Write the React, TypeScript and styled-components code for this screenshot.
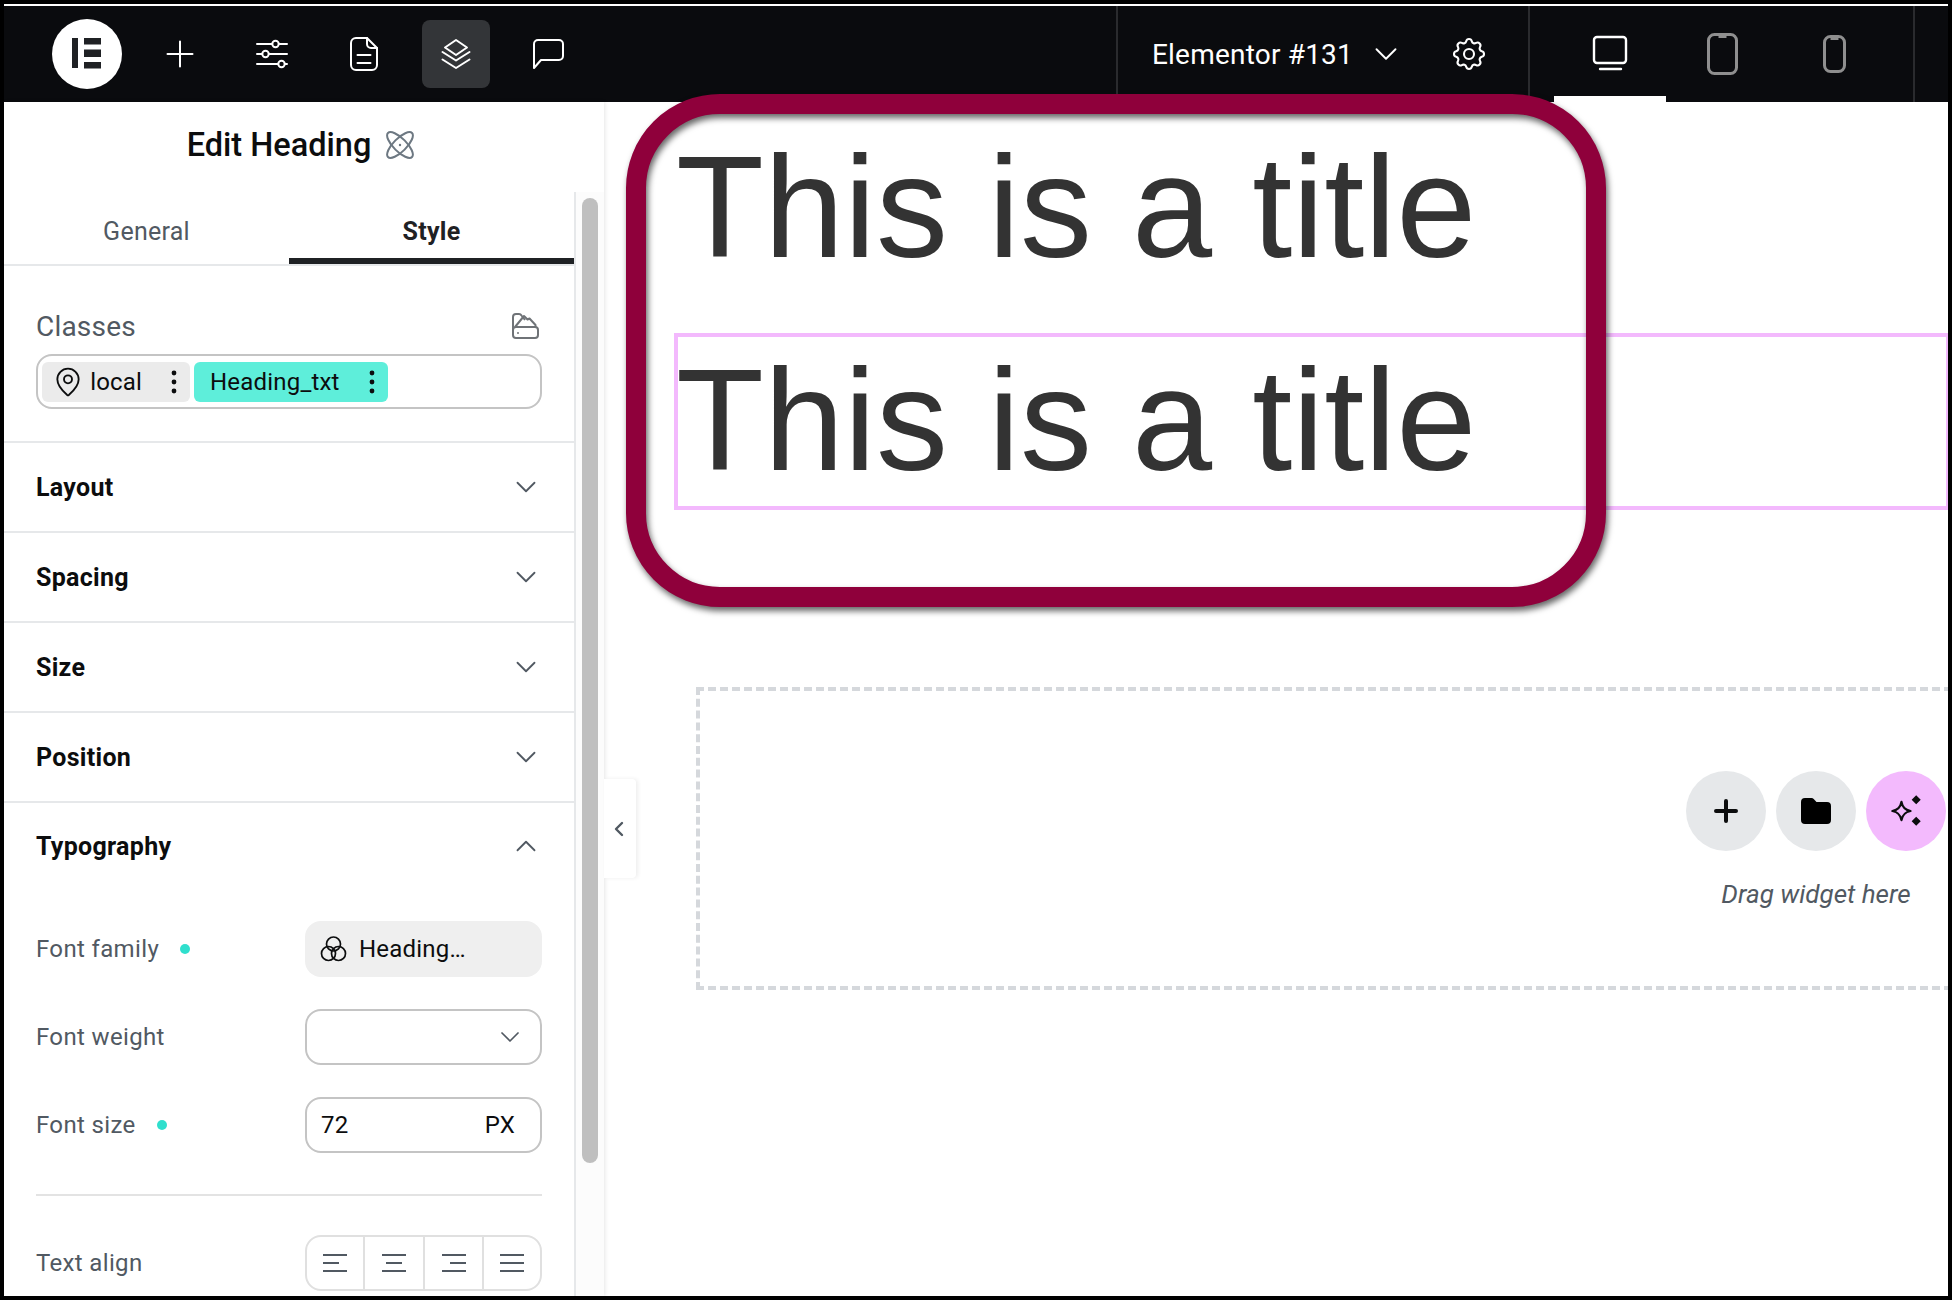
import { createGlobalStyle, styled } from 'styled-components';
import { ChevronDown, ChevronLeft, ChevronUp, MapPin } from 'lucide-react';
import { TbSettings } from 'react-icons/tb';

const GlobalStyle = createGlobalStyle`
  html, body {
    margin: 0;
    padding: 0;
    background: #fff;
  }
  * {
    box-sizing: border-box;
  }
`;

const Frame = styled.div`
  position: relative;
  width: 1952px;
  height: 1300px;
  border: 4px solid #000;
  background: #fff;
  font-family: Roboto, 'Liberation Sans', sans-serif;
  overflow: hidden;
  display: flex;
  flex-direction: column;
`;

const TopBar = styled.header`
  flex: none;
  height: 98px;
  border-top: 2px solid #fff;
  background: #0a0b0e;
  display: flex;
  align-items: stretch;
  justify-content: space-between;
  padding: 0 33px 0 48px;
`;

const BarGroup = styled.div`
  display: flex;
  align-items: center;
  gap: 24px;
`;

const Logo = styled.div`
  width: 70px;
  height: 70px;
  border-radius: 50%;
  background: #fff;
  display: flex;
  align-items: center;
  justify-content: center;
`;

const ToolButton = styled.div<{ $active?: boolean }>`
  width: 68px;
  height: 68px;
  border-radius: 8px;
  background: ${({ $active }) => ($active ? '#333538' : 'transparent')};
  color: #fff;
  display: flex;
  align-items: center;
  justify-content: center;
`;

const BarRight = styled.div`
  display: flex;
  align-items: stretch;
`;

const DocumentGroup = styled.div`
  width: 412px;
  border-left: 2px solid #2a2b2e;
  padding-left: 34px;
  color: #fff;
  display: flex;
  align-items: center;
`;

const DocumentName = styled.span`
  font-size: 28px;
  letter-spacing: 0.2px;
  margin-right: 14px;
`;

const GearSlot = styled.div`
  margin-left: 44px;
  display: flex;
`;

const DeviceGroup = styled.div`
  width: 387px;
  border-left: 2px solid #2a2b2e;
  border-right: 2px solid #2a2b2e;
  padding-left: 24px;
  display: flex;
`;

const DeviceButton = styled.div<{ $active?: boolean }>`
  width: 112px;
  border-bottom: 6px solid ${({ $active }) => ($active ? '#fff' : 'transparent')};
  padding-top: 6px;
  display: flex;
  align-items: center;
  justify-content: center;
`;

const Workspace = styled.div`
  flex: 1;
  min-height: 0;
  display: flex;
  position: relative;
`;

const Panel = styled.aside`
  flex: none;
  width: 600px;
  display: flex;
  flex-direction: column;
  box-shadow: 1px 0 4px rgba(0, 0, 0, 0.1);
`;

const PanelHeader = styled.div`
  flex: none;
  height: 90px;
  padding: 0 7px 4px 0;
  display: flex;
  align-items: center;
  justify-content: center;
  gap: 15px;
`;

const PanelTitle = styled.h1`
  margin: 0;
  font-size: 32.5px;
  font-weight: 500;
  color: #0c0d0e;
`;

const PanelScroll = styled.div`
  flex: 1;
  min-height: 0;
  display: flex;
`;

const PanelBody = styled.div`
  flex: none;
  width: 572px;
  border-right: 2px solid #e6e8ea;
  overflow: hidden;
`;

const Track = styled.div`
  flex: 1;
  padding: 6px 6px 0 6px;
  background: #fcfcfc;
`;

const Thumb = styled.div`
  width: 16px;
  height: 965px;
  border-radius: 8px;
  background: #bfbfbf;
`;

const Tabs = styled.div`
  height: 74px;
  border-bottom: 2px solid #e6e8ea;
  display: flex;
`;

const Tab = styled.div<{ $active?: boolean }>`
  position: relative;
  width: 285px;
  display: flex;
  align-items: center;
  justify-content: center;
  padding-top: 6px;
  font-size: 25px;
  letter-spacing: 0.25px;
  font-weight: ${({ $active }) => ($active ? 700 : 400)};
  color: ${({ $active }) => ($active ? '#1f2124' : '#515962')};

  ${({ $active }) =>
    $active
      ? `&::after {
          content: '';
          position: absolute;
          left: 0;
          right: 0;
          bottom: 0;
          height: 6px;
          background: #1f2124;
        }`
      : ''}
`;

const ClassesSection = styled.section`
  padding: 44px 32px 32px;
  border-bottom: 2px solid #e6e8ea;
`;

const ClassesHeader = styled.div`
  height: 30px;
  margin-bottom: 14px;
  padding: 2px 3px 0 0;
  display: flex;
  align-items: center;
  justify-content: space-between;
`;

const ClassesLabel = styled.span`
  font-size: 28px;
  letter-spacing: 0.2px;
  color: #515962;
`;

const ClassesInput = styled.div`
  height: 55px;
  width: 506px;
  border: 2px solid #c4c4c4;
  border-radius: 16px;
  padding: 6px 4px;
  display: flex;
  gap: 4px;
`;

const Chip = styled.div<{ $width: number; $tone: 'neutral' | 'accent' }>`
  width: ${({ $width }) => $width}px;
  height: 40px;
  border-radius: 6px;
  background: ${({ $tone }) => ($tone === 'accent' ? '#5eeeda' : '#ebebeb')};
  padding: ${({ $tone }) => ($tone === 'accent' ? '0 13px 0 16px' : '0 13px 0 10px')};
  display: flex;
  align-items: center;
  font-size: 24px;
  letter-spacing: 0.2px;
  color: #0c0d0e;
`;

const ChipText = styled.span`
  flex: 1;
  white-space: nowrap;
`;

const AccordionRow = styled.div`
  height: 90px;
  border-bottom: 2px solid #e6e8ea;
  padding: 0 31px 0 32px;
  display: flex;
  align-items: center;
  justify-content: space-between;
`;

const AccordionHead = styled(AccordionRow)`
  border-bottom: none;
  height: 86px;
`;

const AccordionLabel = styled.span`
  font-size: 25px;
  letter-spacing: 0.3px;
  font-weight: 700;
  color: #0c0d0e;
`;

const Fields = styled.div`
  padding: 32px 32px 0;
  display: flex;
  flex-direction: column;
  gap: 32px;
`;

const FieldRow = styled.div`
  display: flex;
  align-items: center;
  justify-content: space-between;
`;

const FieldLabel = styled.div`
  display: flex;
  align-items: center;
  gap: 21px;
  font-size: 24px;
  letter-spacing: 0.35px;
  color: #515962;
`;

const ChangedDot = styled.span`
  width: 10px;
  height: 10px;
  border-radius: 50%;
  background: #2fdfcd;
`;

const Control = styled.div<{ $filled?: boolean }>`
  width: 237px;
  height: 56px;
  border-radius: 16px;
  border: ${({ $filled }) => ($filled ? 'none' : '2px solid #c4c4c4')};
  background: ${({ $filled }) => ($filled ? '#efefef' : '#fff')};
  padding: 0 16px 0 ${({ $filled }) => ($filled ? '15px' : '14px')};
  display: flex;
  align-items: center;
  justify-content: space-between;
  font-size: 24px;
  letter-spacing: 0.2px;
  color: #0c0d0e;
`;

const StartGroup = styled.div`
  display: flex;
  align-items: center;
  gap: 12px;
`;

const UnitText = styled.span`
  margin-right: 9px;
`;

const FieldDivider = styled.hr`
  margin: 9px 0 7px;
  border: none;
  height: 2px;
  background: #e3e3e3;
`;

const AlignGroup = styled.div`
  width: 237px;
  height: 56px;
  border: 2px solid #e0e0e0;
  border-radius: 16px;
  display: grid;
  grid-template-columns: 56px 60px 59px 1fr;
`;

const AlignCell = styled.div`
  display: flex;
  align-items: center;
  justify-content: center;
  & + & {
    border-left: 2px solid #e0e0e0;
  }
`;

const Canvas = styled.main`
  flex: 1;
  min-width: 0;
  overflow: hidden;
  padding-top: 20px;
`;

const Titles = styled.div`
  padding-left: 72px;
  display: flex;
  flex-direction: column;
  gap: 40px;
`;

const Title = styled.h2<{ $selected?: boolean }>`
  margin: 0;
  font-family: 'Liberation Sans', Arial, sans-serif;
  font-size: 144px;
  font-weight: 400;
  line-height: 1.2;
  color: #333;
  white-space: nowrap;
  outline: ${({ $selected }) => ($selected ? '4px solid #f3b9fd' : 'none')};
  outline-offset: -2px;
`;

const DropZone = styled.div`
  width: 2240px;
  height: 303px;
  margin: 179px 0 0 92px;
  border: 4px dashed #d5d8dc;
  padding-top: 80px;
  display: flex;
  flex-direction: column;
  align-items: center;
`;

const DropButtons = styled.div`
  display: flex;
  gap: 10px;
`;

const DropButton = styled.div<{ $accent?: boolean }>`
  width: 80px;
  height: 80px;
  border-radius: 50%;
  background: ${({ $accent }) => ($accent ? '#f3bafd' : '#e6e8ea')};
  display: flex;
  align-items: center;
  justify-content: center;
`;

const DropHint = styled.p`
  margin: 28px 0 0;
  font-size: 26px;
  font-style: italic;
  line-height: 30px;
  color: #515962;
`;

const CollapseTab = styled.div`
  position: absolute;
  left: 600px;
  top: 677px;
  width: 32px;
  height: 99px;
  background: #fff;
  border-radius: 0 4px 4px 0;
  box-shadow: 2px 0 4px rgba(0, 0, 0, 0.07);
  color: #515962;
  display: flex;
  align-items: center;
  justify-content: center;
  padding-right: 3px;
`;

const CalloutRing = styled.div`
  position: absolute;
  left: 622px;
  top: 90px;
  width: 980px;
  height: 513px;
  border: 20px solid #8f003b;
  border-radius: 94px;
  filter: drop-shadow(2px 4px 3px rgba(0, 0, 0, 0.6));
  pointer-events: none;
`;

const ElementorMark = () => (
  <svg width="70" height="70" viewBox="0 0 70 70" fill="#1f2124">
    <rect x="20" y="19" width="6" height="30" />
    <rect x="32" y="19" width="17" height="6.5" />
    <rect x="32" y="30.5" width="17" height="7.5" />
    <rect x="32" y="43" width="17" height="6.5" />
  </svg>
);

const PlusIcon = () => (
  <svg width="32" height="32" viewBox="0 0 32 32" fill="none" stroke="currentColor" strokeWidth="2" strokeLinecap="round">
    <path d="M16 3.5v25M3.5 16h25" />
  </svg>
);

const SlidersIcon = () => (
  <svg width="32" height="32" viewBox="0 0 32 32" fill="none" stroke="currentColor" strokeWidth="2" strokeLinecap="round">
    <path d="M1 6h15M23 6h8M1 16h5M13 16h18M1 26h21M29 26h2" />
    <circle cx="19.5" cy="6" r="3.2" />
    <circle cx="9.5" cy="16" r="3.2" />
    <circle cx="25.5" cy="26" r="3.2" />
  </svg>
);

const DocumentIcon = () => (
  <svg width="32" height="34" viewBox="0 0 32 34" fill="none" stroke="currentColor" strokeWidth="2" strokeLinecap="round" strokeLinejoin="round">
    <path d="M19 1H8a5 5 0 0 0-5 5v22a5 5 0 0 0 5 5h16a5 5 0 0 0 5-5V11z" />
    <path d="M19 1v6a4 4 0 0 0 4 4h6" />
    <path d="M9.500 18h13M9.500 26h13" />
  </svg>
);

const LayersIcon = () => (
  <svg width="32" height="32" viewBox="0 0 32 32" fill="none" stroke="currentColor" strokeWidth="2" strokeLinecap="round" strokeLinejoin="round">
    <path d="M16 2l11 7.500-11 7.500-11-7.500z" />
    <path d="M2.500 14L16 22.500 29.500 14M2.500 21.500L16 30l13.500-8.500" />
  </svg>
);

const ChatIcon = () => (
  <svg width="32" height="32" viewBox="0 0 32 32" fill="none" stroke="currentColor" strokeWidth="2" strokeLinejoin="round">
    <path d="M2 30V6a4 4 0 0 1 4-4h21a4 4 0 0 1 4 4v12a4 4 0 0 1-4 4H9z" />
  </svg>
);

const DesktopIcon = () => (
  <svg width="40" height="40" viewBox="0 0 40 40" fill="none" stroke="#fff" strokeWidth="2.400" strokeLinecap="round">
    <rect x="4" y="3" width="32" height="26" rx="3" />
    <path d="M10 35h21" />
  </svg>
);

const HandsetIcon = ({ width, height }: { width: number; height: number }) => (
  <svg width={width} height={height} viewBox={`0 0 ${width} ${height}`} fill="none" stroke="#8f8f8f" strokeWidth="3">
    <rect x="1.500" y="1.500" width={width - 3} height={height - 3} rx="6" />
    <path d={`M${width / 2 - 4} 3h8`} strokeWidth="4" />
  </svg>
);

const AtomIcon = () => (
  <svg width="28" height="28" viewBox="0 0 28 28" fill="none" stroke="#6d7882" strokeWidth="2">
    <ellipse cx="14" cy="14" rx="17" ry="6.500" transform="rotate(45 14 14)" />
    <ellipse cx="14" cy="14" rx="17" ry="6.500" transform="rotate(-45 14 14)" />
    <circle cx="14" cy="14" r="1.200" fill="#6d7882" stroke="none" />
  </svg>
);

const SwatchIcon = () => (
  <svg width="27" height="26" viewBox="0 0 27 26" fill="none" stroke="#6f7377" strokeWidth="2" strokeLinejoin="round">
    <rect x="1" y="14" width="25" height="11" rx="3" />
    <path d="M1 21V4a3 3 0 0 1 3-3h3a3 3 0 0 1 2.500 1.500L13 7" />
    <path d="M3 14l9-11 3.500 3.500 2-1 6 6.500v2" />
    <circle cx="6" cy="20" r="1" fill="#6f7377" stroke="none" />
  </svg>
);

const KebabIcon = () => (
  <svg width="6" height="24" viewBox="0 0 6 24" fill="#0c0d0e">
    <circle cx="3" cy="3" r="2.400" />
    <circle cx="3" cy="12" r="2.400" />
    <circle cx="3" cy="21" r="2.400" />
  </svg>
);

const GlobalClassIcon = () => (
  <svg width="27" height="26" viewBox="0 0 27 26" fill="none" stroke="#0c0d0e" strokeWidth="1.700">
    <circle cx="13.500" cy="8" r="7" />
    <circle cx="8.500" cy="17.500" r="7" />
    <circle cx="18.500" cy="17.500" r="7" />
  </svg>
);

const AlignIcon = ({ rows }: { rows: [number, number][] }) => (
  <svg width="24" height="18" viewBox="0 0 24 18" fill="none" stroke="#515962" strokeWidth="2">
    {rows.map(([from, to], i) => (
      <path key={i} d={`M${from} ${1 + i * 8}H${to}`} />
    ))}
  </svg>
);

const RoundPlus = () => (
  <svg width="26" height="26" viewBox="0 0 26 26" fill="none" stroke="#0c0d0e" strokeWidth="4" strokeLinecap="round">
    <path d="M13 3v20M3 13h20" />
  </svg>
);

const FolderIcon = () => (
  <svg width="30" height="26" viewBox="0 0 30 26" fill="#000">
    <path d="M4 0h6.500a3 3 0 0 1 2.200 1l2.800 3H26a4 4 0 0 1 4 4v14a4 4 0 0 1-4 4H4a4 4 0 0 1-4-4V4a4 4 0 0 1 4-4z" />
  </svg>
);

const SparkleIcon = () => (
  <svg width="34" height="34" viewBox="0 0 30 30" fill="none">
    <path d="M11 7c1 5 3 7 8 8-5 1-7 3-8 8-1-5-3-7-8-8 5-1 7-3 8-8z" stroke="#0c0d0e" strokeWidth="2" strokeLinejoin="round" />
    <path d="M24 1l4 4-4 4-4-4zM24 20l4 4-4 4-4-4z" fill="#0c0d0e" />
  </svg>
);

const COLLAPSED_SECTIONS = ['Layout', 'Spacing', 'Size', 'Position'];

const ALIGN_OPTIONS: [number, number][][] = [
  [[0, 24], [0, 16], [0, 24]],
  [[0, 24], [4, 20], [0, 24]],
  [[0, 24], [8, 24], [0, 24]],
  [[0, 24], [0, 24], [0, 24]],
];

export default function App() {
  return (
    <Frame>
      <GlobalStyle />
      <TopBar>
        <BarGroup>
          <Logo>
            <ElementorMark />
          </Logo>
          <ToolButton><PlusIcon /></ToolButton>
          <ToolButton><SlidersIcon /></ToolButton>
          <ToolButton><DocumentIcon /></ToolButton>
          <ToolButton $active><LayersIcon /></ToolButton>
          <ToolButton><ChatIcon /></ToolButton>
        </BarGroup>
        <BarRight>
          <DocumentGroup>
            <DocumentName>Elementor #131</DocumentName>
            <ChevronDown size={38} strokeWidth={1.2} />
            <GearSlot>
              <TbSettings size={40} strokeWidth={1.25} />
            </GearSlot>
          </DocumentGroup>
          <DeviceGroup>
            <DeviceButton $active><DesktopIcon /></DeviceButton>
            <DeviceButton><HandsetIcon width={31} height={42} /></DeviceButton>
            <DeviceButton><HandsetIcon width={23} height={38} /></DeviceButton>
          </DeviceGroup>
        </BarRight>
      </TopBar>

      <Workspace>
        <Panel>
          <PanelHeader>
            <PanelTitle>Edit Heading</PanelTitle>
            <AtomIcon />
          </PanelHeader>
          <PanelScroll>
            <PanelBody>
              <Tabs>
                <Tab>General</Tab>
                <Tab $active>Style</Tab>
              </Tabs>
              <ClassesSection>
                <ClassesHeader>
                  <ClassesLabel>Classes</ClassesLabel>
                  <SwatchIcon />
                </ClassesHeader>
                <ClassesInput>
                  <Chip $width={148} $tone="neutral">
                    <MapPin size={32} strokeWidth={1.4} />
                    <ChipText>&nbsp;local</ChipText>
                    <KebabIcon />
                  </Chip>
                  <Chip $width={194} $tone="accent">
                    <ChipText>Heading_txt</ChipText>
                    <KebabIcon />
                  </Chip>
                </ClassesInput>
              </ClassesSection>

              {COLLAPSED_SECTIONS.map((name) => (
                <AccordionRow key={name}>
                  <AccordionLabel>{name}</AccordionLabel>
                  <ChevronDown size={34} strokeWidth={1.3} color="#515962" />
                </AccordionRow>
              ))}

              <AccordionHead>
                <AccordionLabel>Typography</AccordionLabel>
                <ChevronUp size={34} strokeWidth={1.3} color="#515962" />
              </AccordionHead>

              <Fields>
                <FieldRow>
                  <FieldLabel>Font family <ChangedDot /></FieldLabel>
                  <Control $filled>
                    <StartGroup>
                      <GlobalClassIcon />
                      <span>Heading…</span>
                    </StartGroup>
                  </Control>
                </FieldRow>
                <FieldRow>
                  <FieldLabel>Font weight</FieldLabel>
                  <Control>
                    <span />
                    <ChevronDown size={32} strokeWidth={1.3} color="#515962" style={{ marginRight: -2 }} />
                  </Control>
                </FieldRow>
                <FieldRow>
                  <FieldLabel>Font size <ChangedDot /></FieldLabel>
                  <Control>
                    <span>72</span>
                    <UnitText>PX</UnitText>
                  </Control>
                </FieldRow>
                <FieldDivider />
                <FieldRow>
                  <FieldLabel>Text align</FieldLabel>
                  <AlignGroup>
                    {ALIGN_OPTIONS.map((rows, i) => (
                      <AlignCell key={i}>
                        <AlignIcon rows={rows} />
                      </AlignCell>
                    ))}
                  </AlignGroup>
                </FieldRow>
              </Fields>
            </PanelBody>
            <Track>
              <Thumb />
            </Track>
          </PanelScroll>
        </Panel>

        <Canvas>
          <Titles>
            <Title>This is a title</Title>
            <Title $selected>This is a title</Title>
          </Titles>
          <DropZone>
            <DropButtons>
              <DropButton><RoundPlus /></DropButton>
              <DropButton><FolderIcon /></DropButton>
              <DropButton $accent><SparkleIcon /></DropButton>
            </DropButtons>
            <DropHint>Drag widget here</DropHint>
          </DropZone>
        </Canvas>

        <CollapseTab>
          <ChevronLeft size={24} strokeWidth={2.4} />
        </CollapseTab>
      </Workspace>

      <CalloutRing />
    </Frame>
  );
}
